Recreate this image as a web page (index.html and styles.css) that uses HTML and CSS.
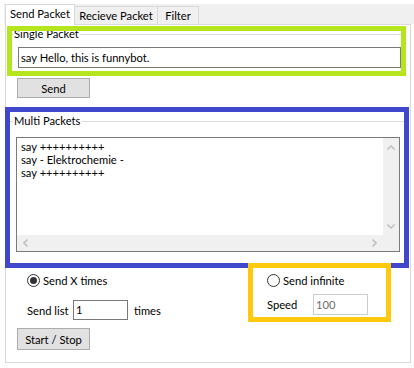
FILE: index.html
```html
<!DOCTYPE html>
<html lang="en">
<head>
    <meta charset="UTF-8">
    <title>Packet Sender</title>
    <link rel="stylesheet" href="styles.css">
</head>
<body>
    <div class="tabstrip">
        <div class="tab tab-active">Send Packet</div>
        <div class="tab tab-recv">Recieve Packet</div>
        <div class="tab tab-filter">Filter</div>
    </div>

    <div class="page">
        <fieldset class="group single">
            <legend>Single Packet</legend>
            <div class="group-body">
                <div class="textbox textbox-wide">say Hello, this is funnybot.</div>
            </div>
        </fieldset>

        <button class="btn btn-send">Send</button>

        <fieldset class="group multi">
            <legend>Multi Packets</legend>
            <div class="group-body">
                <div class="memo">
                    <div class="memo-text">say ++++++++++
say - Elektrochemie -
say ++++++++++</div>
                    <div class="vscroll">
                        <svg class="chev" width="8" height="5" viewBox="0 0 8 5"><polyline points="0.5,4.5 4,1 7.5,4.5"/></svg>
                        <svg class="chev" width="8" height="5" viewBox="0 0 8 5"><polyline points="0.5,0.5 4,4 7.5,0.5"/></svg>
                    </div>
                    <div class="hscroll">
                        <svg class="chev" width="5" height="8" viewBox="0 0 5 8"><polyline points="4.5,0.5 1,4 4.5,7.5"/></svg>
                        <svg class="chev" width="5" height="8" viewBox="0 0 5 8"><polyline points="0.5,0.5 4,4 0.5,7.5"/></svg>
                    </div>
                    <div class="corner"></div>
                </div>
            </div>
        </fieldset>

        <div class="options">
            <div class="col-left">
                <div class="radio radio-indent"><span class="radio-dot checked"></span>Send X times</div>
                <div class="row row-indent">
                    <span class="row-label">Send list</span>
                    <div class="textbox textbox-small">1</div>
                    <span class="row-suffix">times</span>
                </div>
                <button class="btn btn-start">Start / Stop</button>
            </div>
            <div class="col-right">
                <div class="radio"><span class="radio-dot"></span>Send infinite</div>
                <div class="row row-speed">
                    <span class="row-label">Speed</span>
                    <div class="textbox textbox-small disabled">100</div>
                </div>
            </div>
        </div>
    </div>

    <!-- highlight marks drawn over the form -->
    <div class="mark mark-green"></div>
    <div class="mark mark-blue"></div>
    <div class="mark mark-yellow"></div>
</body>
</html>
```

FILE: styles.css
```css
* {
    box-sizing: border-box;
}

body {
    margin: 0;
    width: 414px;
    height: 368px;
    overflow: hidden;
    position: relative;
    background: #fff;
    color: #000;
    font-family: Lato, "Noto Sans", sans-serif;
    font-size: 11.2px;
    white-space: nowrap;
}

/* tabs */
.tabstrip {
    display: flex;
    align-items: flex-end;
    height: 20px;
    margin: 4px 0 0 4px;
    padding-left: 1px;
    background: #f0f0f0;
}

.tab {
    height: 18px;
    margin-left: -1px;
    border: 1px solid #d9d9d9;
    border-bottom: none;
    background: #f0f0f0;
    display: flex;
    align-items: center;
    justify-content: center;
    line-height: 16px;
}

.tab-active {
    position: relative;
    margin-left: 0;
    margin-bottom: -1px;
    width: 70px;
    height: 21px;
    background: #fff;
    padding-bottom: 2px;
}

.tab-recv {
    width: 84px;
}

.tab-filter {
    width: 42px;
}

.page {
    margin-left: 5px;
    width: 406px;
    height: 339px;
    border: 1px solid #d9d9d9;
    background: #fff;
}

/* group boxes */
.group {
    margin: 0 0 0 3px;
    padding: 0;
    width: 397px;
    min-width: 0;
    border: 1px solid #dcdcdc;
}

.group legend {
    margin-left: 3px;
    padding: 0 1px;
    line-height: 14px;
}

.single {
    margin-top: 2px;
}

.single .group-body {
    padding: 6px 4px 3px 8px;
}

.multi {
    margin-top: 16px;
}

.multi .group-body {
    padding: 9px 0 13px 6px;
}

.textbox {
    height: 21px;
    border: 1px solid #7a7a7a;
    padding-left: 2px;
    line-height: 19px;
    background: #fff;
}

.textbox-small {
    width: 55px;
    height: 20px;
    line-height: 18px;
}

.textbox.disabled {
    height: 21px;
    line-height: 19px;
    border-color: #cccccc;
    color: #6d6d6d;
}

.btn {
    display: block;
    width: 73px;
    height: 20px;
    padding: 0;
    border: 1px solid #adadad;
    background: #e1e1e1;
    color: #000;
    font: inherit;
}

.btn-send {
    margin: 6px 0 0 11px;
}

.btn-start {
    margin-top: 8px;
    height: 22px;
}

/* multiline box with scrollbars */
.memo {
    display: grid;
    grid-template-columns: 1fr 16px;
    grid-template-rows: 1fr 16px;
    width: 384px;
    height: 115px;
    border: 1px solid #7a7a7a;
}

.memo-text {
    padding: 2px 4px;
    line-height: 13px;
    white-space: pre;
    overflow: hidden;
}

.vscroll {
    display: flex;
    flex-direction: column;
    align-items: center;
    justify-content: space-between;
    padding: 7px 0 6px;
    background: #f0f0f0;
}

.hscroll {
    display: flex;
    align-items: center;
    justify-content: space-between;
    padding: 0 6px;
    background: #f0f0f0;
}

.corner {
    background: #f0f0f0;
}

.chev {
    display: block;
    fill: none;
    stroke: #c2c2c2;
    stroke-width: 1.6;
}

/* bottom options */
.options {
    display: flex;
    margin-top: 7px;
}

.col-left {
    margin-left: 11px;
    width: 250px;
}

.radio {
    display: flex;
    align-items: center;
    gap: 3px;
    height: 15px;
}

.radio-indent,
.row-indent {
    padding-left: 10px;
}

.radio-dot {
    width: 13px;
    height: 13px;
    border: 1px solid #333;
    border-radius: 50%;
    display: flex;
    align-items: center;
    justify-content: center;
    background: #fff;
}

.radio-dot.checked::after {
    content: "";
    width: 7px;
    height: 7px;
    border-radius: 50%;
    background: #333;
}

.row {
    display: flex;
    align-items: center;
    height: 20px;
    margin-top: 12px;
}

.row-label {
    width: 46px;
}

.row-suffix {
    margin-left: 6px;
}

.row-speed {
    margin-top: 6px;
    height: 21px;
}

/* highlight marks */
.mark {
    position: absolute;
    border: 5px solid;
}

.mark-green {
    left: 7px;
    top: 26px;
    width: 399px;
    height: 50px;
    border-color: #b5e61d;
}

.mark-blue {
    left: 5px;
    top: 107px;
    width: 404px;
    height: 161px;
    border-color: #3f48cc;
}

.mark-yellow {
    left: 248px;
    top: 263px;
    width: 143px;
    height: 59px;
    border-color: #ffc90e;
}
```
